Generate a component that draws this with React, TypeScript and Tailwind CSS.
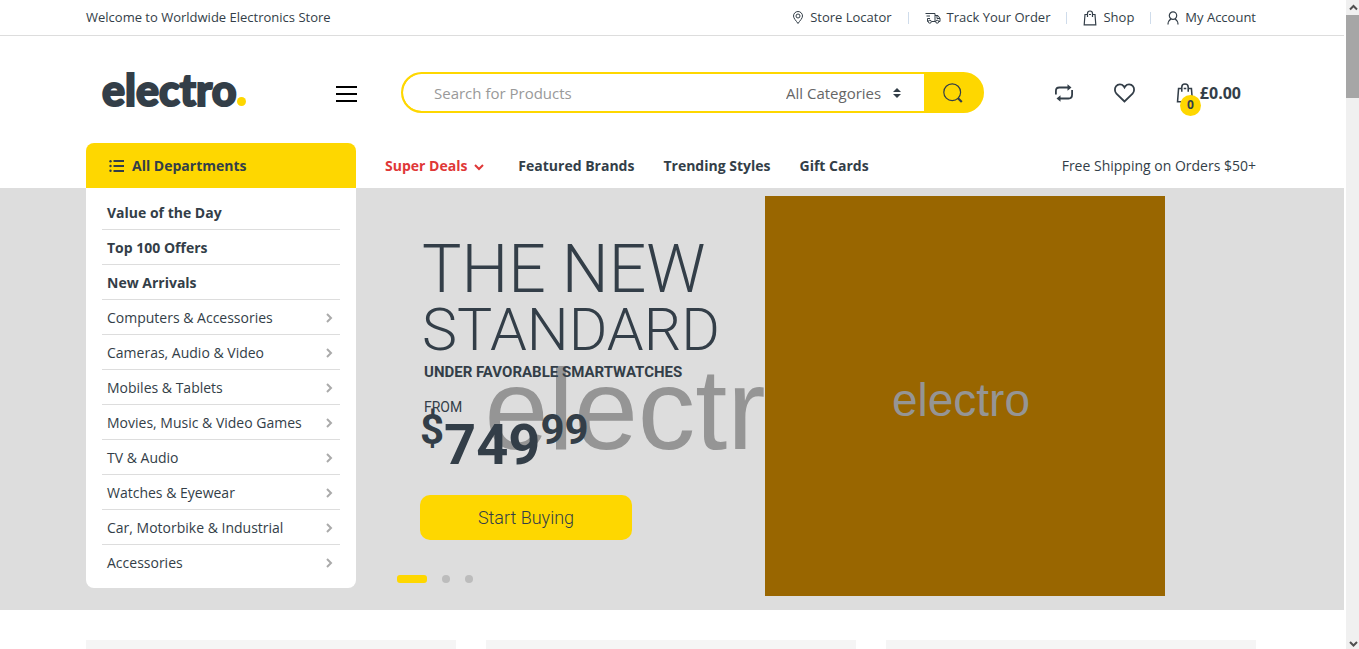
import { useState } from 'react';
import type { ReactNode } from 'react';

const TOP_LINKS: { label: string; icon: ReactNode }[] = [
  { label: 'Store Locator', icon: <PinIcon /> },
  { label: 'Track Your Order', icon: <TruckIcon /> },
  { label: 'Shop', icon: <BagIcon className="w-3.5 h-4" /> },
  { label: 'My Account', icon: <UserIcon /> },
];

const DEPARTMENTS = [
  { name: 'Value of the Day', featured: true },
  { name: 'Top 100 Offers', featured: true },
  { name: 'New Arrivals', featured: true },
  { name: 'Computers & Accessories', featured: false },
  { name: 'Cameras, Audio & Video', featured: false },
  { name: 'Mobiles & Tablets', featured: false },
  { name: 'Movies, Music & Video Games', featured: false },
  { name: 'TV & Audio', featured: false },
  { name: 'Watches & Eyewear', featured: false },
  { name: 'Car, Motorbike & Industrial', featured: false },
  { name: 'Accessories', featured: false },
];

const NAV_LINKS = ['Featured Brands', 'Trending Styles', 'Gift Cards'];

function PinIcon() {
  return (
    <svg className="w-3 h-3.5" viewBox="0 0 12 14" fill="none" stroke="currentColor" strokeWidth="1">
      <path d="M6 12.5C4.2 9.8 1.500 7.400 1.500 5a4.500 4.500 0 0 1 9 0c0 2.400-2.700 4.800-4.500 7.500z" />
      <circle cx="6" cy="5" r="2" />
    </svg>
  );
}

function TruckIcon() {
  return (
    <svg className="w-4 h-3.5" viewBox="0 0 16 14" fill="none" stroke="currentColor" strokeWidth="1">
      <path d="M.5 2.500h9.500v8H6.500M1.500 5h3.500M2.500 7.500H5M10 4.500h3l2 3v3h-1.300M2.500 7.500v3h.700M12 4.500v3h3M10 10.500h.700" />
      <circle cx="4.800" cy="10.700" r="1.500" />
      <circle cx="12.200" cy="10.700" r="1.500" />
    </svg>
  );
}

function BagIcon({ className }: { className: string }) {
  return (
    <svg className={className} viewBox="0 0 14 16" fill="none" stroke="currentColor" strokeWidth="1.200">
      <path d="M4.500 4.500H2L1.200 14.800h11.600L12 4.500H9.500M6 4.500h2" />
      <path d="M4.500 7V3.500a2.500 2.500 0 0 1 5 0V7" />
    </svg>
  );
}

function UserIcon() {
  return (
    <svg className="w-3 h-3.5" viewBox="0 0 12 14" fill="none" stroke="currentColor" strokeWidth="1.200">
      <circle cx="6" cy="4.600" r="3.700" />
      <path d="M1 13.500c0-3 1.400-4.700 3-5.600M11 13.500c0-3-1.400-4.700-3-5.600" />
    </svg>
  );
}

function SearchIcon() {
  return (
    <svg className="w-5 h-5" viewBox="0 0 20 20" fill="none" stroke="currentColor">
      <circle cx="9.200" cy="9.200" r="8.400" strokeWidth="1.200" />
      <path d="M14.800 15l4 4" strokeWidth="2.200" />
    </svg>
  );
}

function CompareIcon() {
  return (
    <svg className="w-5 h-5" viewBox="0 0 20 20" fill="none" stroke="currentColor" strokeWidth="1.800">
      <path d="M1.900 11.500V8c0-2 1.200-3.500 3.500-3.500H14" />
      <path d="M18.100 7v4.500c0 2.500-1.200 4-3.500 4H6" />
      <path d="M13.500 1.300l4 3.200-4 3.200zM6.500 12.300l-4 3.200 4 3.200z" fill="currentColor" stroke="none" />
    </svg>
  );
}

function HeartIcon() {
  return (
    <svg className="w-6 h-5" viewBox="0 0 24 20" fill="none" stroke="currentColor" strokeWidth="1.800">
      <path d="M11.500 18.500L3.400 10.600C1.600 8.800 1.400 5.300 3 3.300c2-2.600 5.800-2.500 7.600-.200l.900 1.400.9-1.400c1.800-2.300 5.600-2.400 7.600.200 1.600 2 1.400 5.500-.4 7.300z" />
    </svg>
  );
}

function ListIcon() {
  return (
    <svg className="w-4 h-3" viewBox="0 0 16 12" fill="currentColor">
      <path d="M4.500 0H15V2H4.500zM4.500 5H15V7H4.500zM4.500 10H15v2H4.500z" />
      <circle cx="1.500" cy="1.200" r="1.200" />
      <circle cx="1.500" cy="6" r="1.200" />
      <circle cx="1.500" cy="10.800" r="1.200" />
    </svg>
  );
}

function TopBar() {
  return (
    <div className="border-b border-[#dddddd]">
      <div className="mx-auto flex h-[35px] max-w-[1172px] items-center justify-between pr-0.5 text-[13px]">
        <a href="#">Welcome to Worldwide Electronics Store</a>
        <ul className="flex items-center">
          {TOP_LINKS.map((link, index) => (
            <li key={link.label} className="flex items-center">
              {index > 0 && <span className="mx-4 h-3 w-px bg-[#cfdceb]" />}
              <a href="#" className="flex items-center gap-1.5">
                {link.icon}
                {link.label}
              </a>
            </li>
          ))}
        </ul>
      </div>
    </div>
  );
}

function Header() {
  const [query, setQuery] = useState('');

  return (
    <header className="mx-auto flex h-[107px] max-w-[1172px] items-center pr-0.5 pt-1.5">
      <div className="flex w-[271px] items-center justify-between pb-1.5 pl-4">
        <a
          href="#"
          className="flex items-baseline font-['Lato'] text-[43px] font-black leading-none [-webkit-text-stroke:2px_#333e48]"
        >
          electro
          <span className="h-[9px] w-[9px] rounded-full bg-[#fed700]" />
        </a>
        <button type="button" aria-label="Menu" className="flex w-[21px] flex-col gap-[5px] pt-2">
          <span className="h-0.5 w-full bg-black" />
          <span className="h-0.5 w-full bg-black" />
          <span className="h-0.5 w-full bg-black" />
        </button>
      </div>

      {/* Search */}
      <form
        className="ml-11 flex h-[41px] w-[583px] overflow-hidden rounded-full border-2 border-[#fed700] bg-[#fed700] text-[15px]"
        onSubmit={(e) => e.preventDefault()}
      >
        <input
          type="text"
          aria-label="Search for Products"
          placeholder="Search for Products"
          value={query}
          onChange={(e) => setQuery(e.target.value)}
          className="min-w-0 flex-1 rounded-l-full bg-white pl-[31px] pt-0.5 outline-none placeholder:text-[#999999]"
        />
        <div className="relative flex items-center bg-white">
          <select aria-label="Category" className="w-[138px] appearance-none bg-transparent pt-0.5 text-[#666666] outline-none">
            <option>All Categories</option>
            <option>Computers &amp; Accessories</option>
            <option>TV &amp; Audio</option>
          </select>
          <svg className="pointer-events-none absolute right-[23px] h-2.5 w-2" viewBox="0 0 8 10" fill="currentColor">
            <path d="M4 0l4 4H0zM4 10L0 6h8z" />
          </svg>
        </div>
        <button type="submit" aria-label="Search" className="flex w-[58px] items-center justify-center">
          <SearchIcon />
        </button>
      </form>

      <div className="ml-auto flex items-center pr-[15px]">
        <a href="#" aria-label="Compare"><CompareIcon /></a>
        <a href="#" aria-label="Wishlist" className="ml-[39px]"><HeartIcon /></a>
        <a href="#" className="relative ml-[39px] flex items-center gap-1.5 font-bold">
          <BagIcon className="h-[22px] w-[18px]" />
          £0.00
          <span className="absolute left-1 top-3.5 flex h-[21px] w-[21px] items-center justify-center rounded-full bg-[#fed700] text-xs">
            0
          </span>
        </a>
      </div>
    </header>
  );
}

function NavBar() {
  return (
    <nav className="mx-auto flex h-[45px] max-w-[1172px] items-center pr-0.5 text-sm font-bold">
      <a href="#" className="flex h-full w-[270px] items-center gap-[7px] rounded-t-lg bg-[#fed700] pl-[23px]">
        <ListIcon />
        All Departments
      </a>
      <div className="flex items-center gap-[29px] pl-[29px]">
        <a href="#" className="flex items-center gap-1 text-[#df3737]">
          Super Deals
          <svg className="h-2.5 w-[18px]" viewBox="0 0 18 10" fill="none" stroke="currentColor" strokeWidth="2">
            <path d="M4 4l4 4 4-4" />
          </svg>
        </a>
        {NAV_LINKS.map((label) => (
          <a key={label} href="#">{label}</a>
        ))}
      </div>
      <span className="ml-auto font-normal">Free Shipping on Orders $50+</span>
    </nav>
  );
}

function DepartmentMenu() {
  return (
    <ul className="h-[400px] w-[270px] shrink-0 rounded-b-lg bg-white px-4 pt-[7px] text-sm">
      {DEPARTMENTS.map((department) => (
        <li key={department.name} className="border-b border-[#dddddd] last:border-b-0">
          <a
            href="#"
            className={`flex h-[34px] items-center justify-between pl-[5px] pr-[7px] pt-0.5 ${department.featured ? 'font-bold' : ''}`}
          >
            {department.name}
            {!department.featured && (
              <svg className="h-2.5 w-2" viewBox="0 0 8 10" fill="none" stroke="#aaaaaa" strokeWidth="2">
                <path d="M2 1l4 4-4 4" />
              </svg>
            )}
          </a>
        </li>
      ))}
    </ul>
  );
}

function Hero() {
  const [slide, setSlide] = useState(0);

  return (
    <section className="relative bg-[#dddddd]">
      {/* Slide backdrop */}
      <div className="absolute inset-0 flex items-center justify-center overflow-hidden pr-[30px] pt-5 font-['Liberation_Sans'] text-[115px] leading-none text-[#959595]">
        electro
      </div>

      <div className="relative mx-auto flex h-[422px] max-w-[1172px] pr-0.5">
        <DepartmentMenu />

        <div className="w-[409px] pl-[41px] pt-[52px] font-['Roboto']">
          <div className="pl-[23px]">
            <h1 className="pl-0.5 font-light">
              <span className="block text-[66px] leading-[60px]">THE NEW</span>
              <span className="block text-[59px] leading-[60px]">STANDARD</span>
            </h1>
            <p className="pl-1 text-[15px] font-bold leading-6">UNDER FAVORABLE SMARTWATCHES</p>
            <p className="pl-1 pt-[13px] text-sm leading-5">FROM</p>
            <p className="flex h-[58px] items-start font-bold">
              <span className="text-[42px] leading-[26px]">$</span>
              <span className="text-[56px] leading-[56px]">749</span>
              <span className="text-[42px] leading-[26px]">99</span>
            </p>
          </div>
          <button type="button" className="ml-[23px] mt-5 h-[45px] w-[212px] rounded-[10px] bg-[#fed700] text-lg font-light">
            Start Buying
          </button>
          <div className="mt-[35px] flex items-center gap-[15px]">
            {[0, 1, 2].map((i) => (
              <button
                key={i}
                type="button"
                aria-label={`Slide ${i + 1}`}
                onClick={() => setSlide(i)}
                className={slide === i ? 'h-2 w-[30px] rounded-[3px] bg-[#fed700]' : 'h-2 w-2 rounded-full bg-[#bcbcbc]'}
              />
            ))}
          </div>
        </div>

        <div className="mt-2 flex h-[400px] w-[400px] shrink-0 items-center justify-center bg-[#996600] pr-2 pt-2 font-['Liberation_Sans'] text-[46px] text-[#959595]">
          electro
        </div>
      </div>
    </section>
  );
}

function Scrollbar() {
  return (
    <div className="ml-0.5 flex w-[13px] shrink-0 flex-col bg-[#f0f0f0] text-[#505050]">
      <svg className="h-[15px] w-full" viewBox="0 0 13 15" fill="none" stroke="currentColor" strokeWidth="2">
        <path d="M4 9.500l3.500-3.500 3.500 3.500" />
      </svg>
      <div className="h-[83px] bg-[#a6a6a6]" />
      <svg className="mt-auto h-[15px] w-full" viewBox="0 0 13 15" fill="none" stroke="currentColor" strokeWidth="2">
        <path d="M4 8l3.500 3.500 3.500-3.500" />
      </svg>
    </div>
  );
}

export default function App() {
  return (
    <div className="flex h-screen overflow-hidden bg-white font-['Open_Sans',sans-serif] text-[#333e48]">
      <div className="min-w-0 flex-1 overflow-hidden">
        <TopBar />
        <Header />
        <NavBar />
        <Hero />

        {/* Promo blocks */}
        <div className="mx-auto mt-[30px] grid max-w-[1172px] grid-cols-3 gap-[30px] pr-0.5">
          <div className="h-36 bg-[#f5f5f5]" />
          <div className="h-36 bg-[#f5f5f5]" />
          <div className="h-36 bg-[#f5f5f5]" />
        </div>
      </div>
      <Scrollbar />
    </div>
  );
}
